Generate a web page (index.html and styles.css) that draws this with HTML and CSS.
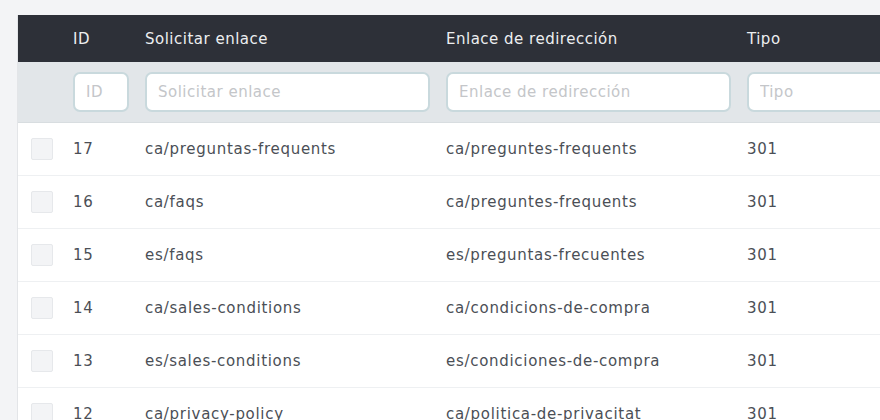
FILE: index.html
```html
<!DOCTYPE html>
<html lang="es">
<head>
    <meta charset="UTF-8">
    <title>Redirecciones</title>
    <link rel="stylesheet" href="styles.css">
</head>
<body>
    <div class="panel">
        <table class="grid">
            <colgroup>
                <col class="col-check">
                <col class="col-id">
                <col class="col-link">
                <col class="col-link">
                <col class="col-type">
            </colgroup>
            <thead>
                <tr class="head-row">
                    <th></th>
                    <th>ID</th>
                    <th>Solicitar enlace</th>
                    <th>Enlace de redirección</th>
                    <th>Tipo</th>
                </tr>
                <tr class="filter-row">
                    <th></th>
                    <th><input type="text" placeholder="ID"></th>
                    <th><input type="text" placeholder="Solicitar enlace"></th>
                    <th><input type="text" placeholder="Enlace de redirección"></th>
                    <th><input type="text" placeholder="Tipo"></th>
                </tr>
            </thead>
            <tbody>
                <tr>
                    <td><span class="check"></span></td>
                    <td>17</td>
                    <td>ca/preguntas-frequents</td>
                    <td>ca/preguntes-frequents</td>
                    <td>301</td>
                </tr>
                <tr>
                    <td><span class="check"></span></td>
                    <td>16</td>
                    <td>ca/faqs</td>
                    <td>ca/preguntes-frequents</td>
                    <td>301</td>
                </tr>
                <tr>
                    <td><span class="check"></span></td>
                    <td>15</td>
                    <td>es/faqs</td>
                    <td>es/preguntas-frecuentes</td>
                    <td>301</td>
                </tr>
                <tr>
                    <td><span class="check"></span></td>
                    <td>14</td>
                    <td>ca/sales-conditions</td>
                    <td>ca/condicions-de-compra</td>
                    <td>301</td>
                </tr>
                <tr>
                    <td><span class="check"></span></td>
                    <td>13</td>
                    <td>es/sales-conditions</td>
                    <td>es/condiciones-de-compra</td>
                    <td>301</td>
                </tr>
                <tr>
                    <td><span class="check"></span></td>
                    <td>12</td>
                    <td>ca/privacy-policy</td>
                    <td>ca/politica-de-privacitat</td>
                    <td>301</td>
                </tr>
            </tbody>
        </table>
    </div>
</body>
</html>
```

FILE: styles.css
```css
* {
    margin: 0;
    padding: 0;
    box-sizing: border-box;
}

html, body {
    height: 100%;
    overflow: hidden;
}

body {
    font-family: "DejaVu Sans", "Open Sans", Arial, sans-serif;
    background: #f3f4f6;
    padding: 15px 0 0 18px;
}

.panel {
    width: 862px;
    overflow: hidden;
    background: #fff;
    box-shadow: -1px 0 0 #e3e5e8;
}

.grid {
    width: 1000px;
    border-collapse: collapse;
    table-layout: fixed;
    font-size: 15px;
    letter-spacing: 0.7px;
    color: #4b4f56;
}

.col-check { width: 55px; }
.col-id { width: 72px; }
.col-link { width: 301px; }
.col-type { width: 271px; }

.grid th,
.grid td {
    text-align: left;
    padding: 0 16px 0 0;
    white-space: nowrap;
}

.head-row {
    background: #2d3038;
    height: 47px;
}

.head-row th {
    color: #eceef0;
    font-weight: normal;
    letter-spacing: 0.5px;
}

.filter-row {
    background: #e2e6e9;
    height: 60px;
    border-bottom: 1px solid #d8dde0;
}

.filter-row input {
    width: 100%;
    height: 40px;
    border: 2px solid #c9d9dd;
    border-radius: 7px;
    background: #fff;
    padding: 0 11px;
    font-family: inherit;
    font-size: 15px;
    letter-spacing: 0.5px;
    color: #4b4f56;
    outline: none;
}

.filter-row input::placeholder {
    color: #c4c6c9;
}

.grid tbody tr {
    height: 53px;
    border-bottom: 1px solid #eef0f2;
}

.grid tbody td:first-child {
    padding-left: 13px;
}

.check {
    display: block;
    width: 22px;
    height: 22px;
    background: #f3f4f6;
    border: 1px solid #e6e8eb;
    border-radius: 2px;
}
```
